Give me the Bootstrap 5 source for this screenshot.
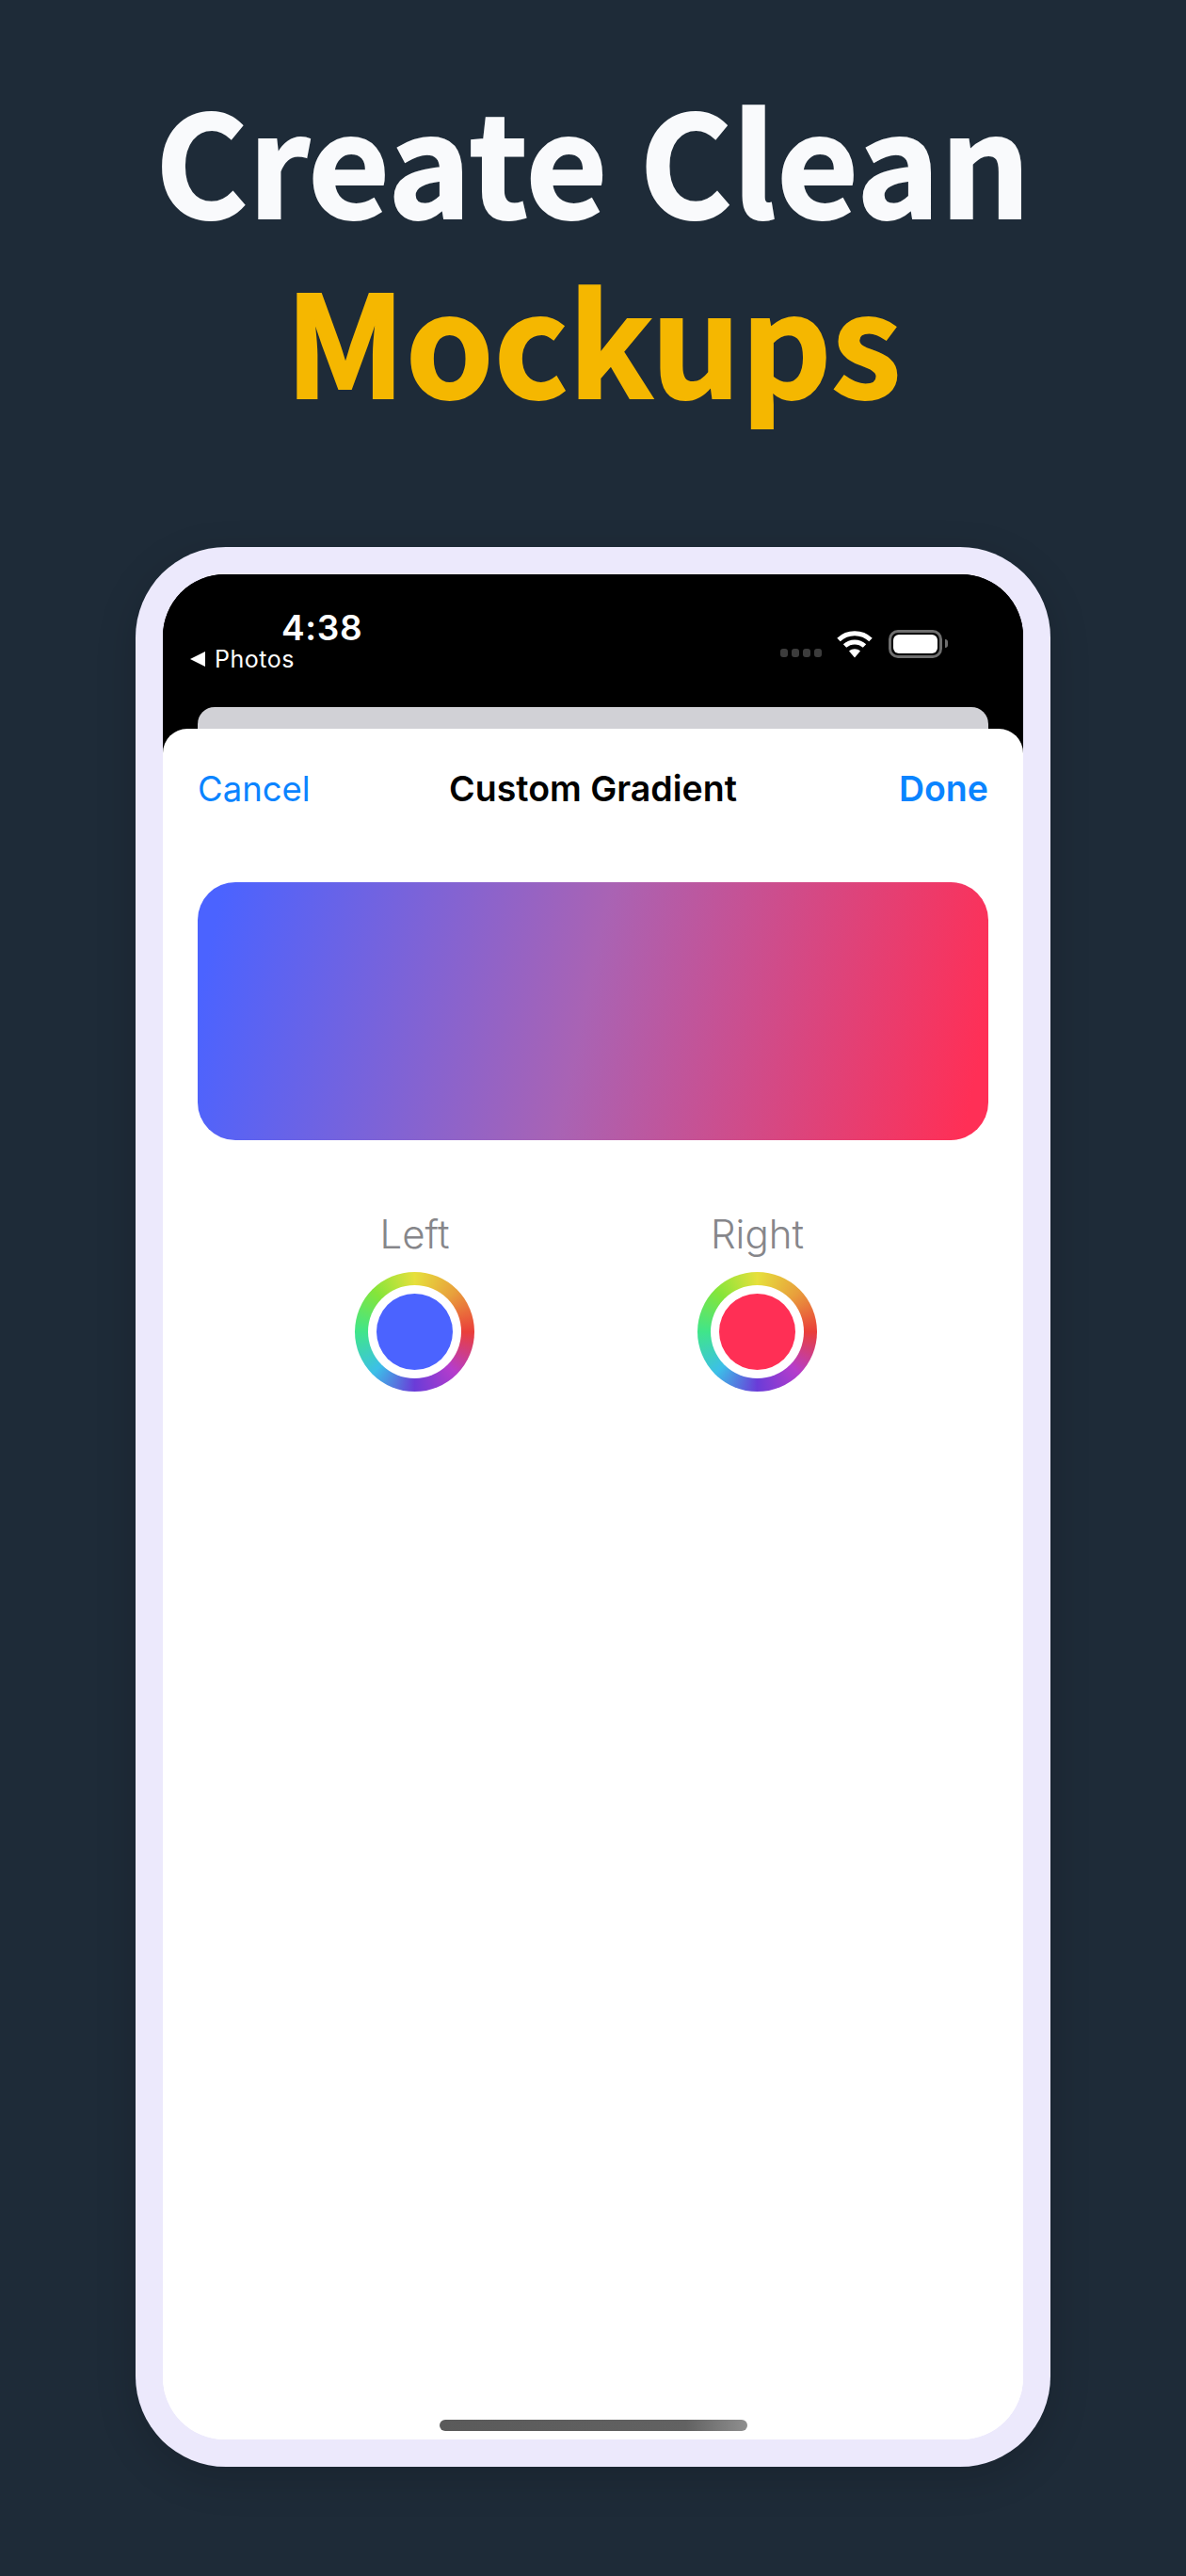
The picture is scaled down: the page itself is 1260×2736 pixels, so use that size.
<!DOCTYPE html>
<html lang="en">
<head>
<meta charset="utf-8">
<title>Create Clean Mockups</title>
<link href="https://cdn.jsdelivr.net/npm/bootstrap@5.3.0/dist/css/bootstrap.min.css" rel="stylesheet">
<style>
html,body{height:2736px;overflow:hidden}
body{background:#1e2b38;font-family:Inter,"Liberation Sans",sans-serif}
.headline{font-family:"Noto Sans CJK JP","Noto Sans",sans-serif;font-weight:700;font-size:150px;line-height:191px;letter-spacing:0;padding-top:71px;height:581px;margin:0;color:#f9fafc;-webkit-text-stroke:2px currentColor}
.headline span{color:#f5b700}
.device{width:972px;height:2039px;background:#ece9fc;border-radius:96px;padding:29px;box-shadow:0 12px 44px rgba(0,0,0,.16)}
.screen{height:100%;background:linear-gradient(#000 300px,#fff 300px);border-radius:66px;overflow:hidden}
.statusbar{height:141px;padding:0 80px 0 29px;color:#fff;background:#000}
.stack-time{padding-top:34px}
.clock{font-size:37px;font-weight:600;line-height:45px;margin-left:97px;letter-spacing:.7px}
.backlink{font-size:25px;line-height:30px;margin-top:-4px;letter-spacing:.5px;gap:10px}
.back-tri{width:0;height:0;border-top:8px solid transparent;border-bottom:8px solid transparent;border-right:16px solid #fff}
.indicators{padding-top:59px}
.dots{gap:3.5px;margin-right:16px;margin-top:20px}
.dots i{width:8.500px;height:8.500px;border-radius:3px;background:#3c3c3c}
.cell-wifi{margin-right:17px}
.batt{width:57px;height:30px;border:3px solid #6e6e6e;border-radius:10px;padding:2px;margin-right:3px}
.batt b{display:block;height:100%;background:#fff;border-radius:6px}
.nub{width:3px;height:9px;background:#6e6e6e;border-radius:0 3px 3px 0;margin-top:10px}
.rearcard{height:23px;margin:0 37px;background:#d1d1d6;border-radius:18px 18px 0 0}
.backdrop{background:#000}
.sheet{height:1817px;background:#fff;border-radius:26px 26px 0 0;padding:0 37px}
.sheetnav{height:163px;padding-bottom:34px}
.sheetnav .act{color:#0a84ff;font-size:36.500px;flex:1 1 0}
.sheetnav .ttl{color:#000;font-weight:600;font-size:37.500px}
.sheetnav .fin{color:#0a84ff;font-weight:600;font-size:37.500px;flex:1 1 0;text-align:right}
.swatch{height:274px;border-radius:40px;background:linear-gradient(102deg,#4b63ff 3%,#a963b4 49%,#ff2f56 97%)}
.pickers{margin-top:76px;padding-left:167px;gap:237px}
.picker{width:127px}
.picker-label{font-size:42px;font-weight:300;line-height:48px;color:#86868a;white-space:nowrap;margin-bottom:16px}
.wheel{width:127px;height:127px;border-radius:50%;padding:14px;background:conic-gradient(#e6e03c 0deg,#e8a03c 45deg,#ea3f3a 90deg,#b53ccb 135deg,#6a3cd8 180deg,#3cbfe8 225deg,#40e58a 270deg,#84e53a 315deg,#e6e03c 360deg)}
.wheel-gap{width:100%;height:100%;border-radius:50%;background:#fff;padding:9px}
.wheel-fill{width:100%;height:100%;border-radius:50%}
.fill-blue{background:#4b63ff}
.fill-red{background:#ff2f55}
.homebar-wrap{margin-top:1092px}
.homebar{width:327px;height:12px;border-radius:6px;background:linear-gradient(90deg,#5a5a5a 0%,#626262 80%,#8f8f8f 100%)}
</style>
</head>
<body>
<h1 class="headline text-center">Create Clean<br><span>Mockups</span></h1>
<div class="device mx-auto">
  <div class="screen d-flex flex-column">
    <div class="statusbar d-flex justify-content-between">
      <div class="stack-time">
        <div class="clock">4:38</div>
        <div class="backlink d-flex align-items-center"><span class="back-tri"></span><span>Photos</span></div>
      </div>
      <div class="indicators d-flex align-items-start">
        <div class="dots d-flex"><i></i><i></i><i></i><i></i></div>
        <svg class="cell-wifi" width="38" height="30" viewBox="0 0 38 30" aria-hidden="true">
          <path d="M2 10.500C11.500 1.500 26.500 1.500 36 10.500" fill="none" stroke="#fff" stroke-width="5"/>
          <path d="M8.500 17C14.500 11.500 23.500 11.500 29.500 17" fill="none" stroke="#fff" stroke-width="5"/>
          <path d="M13 22.500C16.500 19.500 21.500 19.500 25 22.500L19 29.500Z" fill="#fff"/>
        </svg>
        <div class="batt"><b></b></div>
        <div class="nub"></div>
      </div>
    </div>
    <div class="backdrop"><div class="rearcard"></div></div>
    <div class="sheet d-flex flex-column">
      <div class="sheetnav d-flex justify-content-between align-items-center">
        <span class="act">Cancel</span>
        <span class="ttl">Custom Gradient</span>
        <span class="fin">Done</span>
      </div>
      <div class="swatch"></div>
      <div class="pickers d-flex">
        <div class="picker d-flex flex-column align-items-center">
          <div class="picker-label">Left</div>
          <div class="wheel"><div class="wheel-gap"><div class="wheel-fill fill-blue"></div></div></div>
        </div>
        <div class="picker d-flex flex-column align-items-center">
          <div class="picker-label">Right</div>
          <div class="wheel"><div class="wheel-gap"><div class="wheel-fill fill-red"></div></div></div>
        </div>
      </div>
      <div class="homebar-wrap d-flex justify-content-center"><div class="homebar"></div></div>
    </div>
  </div>
</div>
<script src="https://cdn.jsdelivr.net/npm/bootstrap@5.3.0/dist/js/bootstrap.bundle.min.js"></script>
</body>
</html>
